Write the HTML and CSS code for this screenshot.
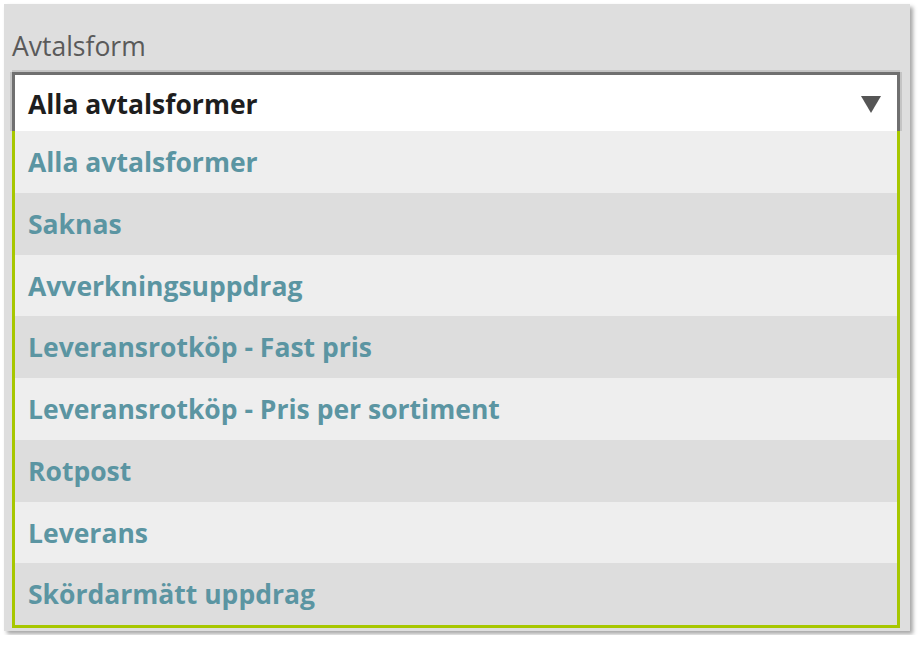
FILE: index.html
```html
<!DOCTYPE html>
<html lang="sv">
<head>
    <meta charset="UTF-8">
    <title>Avtalsform</title>
    <link rel="stylesheet" href="styles.css">
</head>
<body>
    <div class="panel">
        <div class="label">Avtalsform</div>
        <div class="select">
            <span class="selected">Alla avtalsformer</span>
            <svg class="arrow" width="20" height="17" viewBox="0 0 20 17"><polygon points="0,0 20,0 10,17" fill="#555"/></svg>
        </div>
        <ul class="options">
            <li>Alla avtalsformer</li>
            <li>Saknas</li>
            <li>Avverkningsuppdrag</li>
            <li>Leveransrotköp - Fast pris</li>
            <li>Leveransrotköp - Pris per sortiment</li>
            <li>Rotpost</li>
            <li>Leverans</li>
            <li>Skördarmätt uppdrag</li>
        </ul>
    </div>
</body>
</html>
```

FILE: styles.css
```css
body {
    margin: 0;
    padding: 4px;
    background: #fff;
    font-family: "Open Sans", "DejaVu Sans", sans-serif;
}
.panel {
    box-sizing: border-box;
    width: 906px;
    height: 627px;
    padding: 24px 10px 0 8px;
    background: #dedede;
    box-shadow: 3px 3px 4px rgba(0, 0, 0, 0.35);
}
.label {
    font-size: 26.5px;
    line-height: 36px;
    color: #5a5a5a;
    margin-bottom: 8px;
}
.select {
    box-sizing: border-box;
    height: 59px;
    display: flex;
    align-items: center;
    justify-content: space-between;
    padding: 2px 16px 0 13px;
    background: #fff;
    border: 3px solid #707070;
    border-bottom: 0;
    box-shadow: 0 -2px 0 0 #c4c4c4, -2px 0 0 0 #c4c4c4, 2px 0 0 0 #c4c4c4;
}
.selected {
    font-size: 26.5px;
    font-weight: bold;
    color: #1e1e1e;
}
.options {
    list-style: none;
    margin: 0;
    padding: 0;
    border: 3px solid #a7c700;
    border-top: 0;
}
.options li {
    box-sizing: border-box;
    height: 61.75px;
    line-height: 60.75px;
    padding: 1px 0 0 13px;
    font-size: 26.5px;
    font-weight: bold;
    color: #5b95a2;
    background: #eeeeee;
}
.options li:nth-child(even) {
    background: #dddddd;
}
```
